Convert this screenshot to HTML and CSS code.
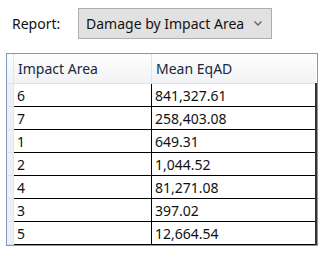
FILE: index.html
```html
<!DOCTYPE html>
<html lang="en">
<head>
    <meta charset="UTF-8">
    <meta name="viewport" content="width=device-width, initial-scale=1.0">
    <title>Damage Report</title>
    <link rel="stylesheet" href="styles.css">
</head>
<body>
    <div class="toolbar">
        <span class="label">Report:</span>
        <div class="select">
            <span>Damage by Impact Area</span>
            <svg class="chevron" width="8" height="5" viewBox="0 0 8 5"><path d="M0.5 0.5 L4 4 L7.5 0.5" fill="none" stroke="#606060" stroke-width="1.3"/></svg>
        </div>
    </div>

    <div class="grid">
        <table>
            <tr class="head">
                <th class="strip"></th>
                <th class="col1">Impact Area</th>
                <th class="col2">Mean EqAD</th>
            </tr>
            <tr><td class="strip"></td><td>6</td><td>841,327.61</td></tr>
            <tr><td class="strip"></td><td>7</td><td>258,403.08</td></tr>
            <tr><td class="strip"></td><td>1</td><td>649.31</td></tr>
            <tr><td class="strip"></td><td>2</td><td>1,044.52</td></tr>
            <tr><td class="strip"></td><td>4</td><td>81,271.08</td></tr>
            <tr><td class="strip"></td><td>3</td><td>397.02</td></tr>
            <tr><td class="strip"></td><td>5</td><td>12,664.54</td></tr>
        </table>
    </div>
</body>
</html>
```

FILE: styles.css
```css
body {
    font-family: 'Noto Sans', 'Open Sans', sans-serif;
    font-size: 14px;
    background-color: white;
    color: #111;
    margin: 0;
}
.toolbar {
    display: flex;
    align-items: center;
    padding: 8px 0 0 12px;
    height: 31px;
}
.label {
    width: 66px;
}
.select {
    display: flex;
    align-items: center;
    justify-content: space-between;
    box-sizing: border-box;
    width: 194px;
    height: 31px;
    padding: 0 9px 0 7px;
    background-color: #e1e1e1;
    border: 1px solid #adadad;
}
.grid {
    margin: 14px 0 0 6px;
    width: 312px;
    box-sizing: border-box;
    border: 1px solid #7a9ac0;
}
table {
    width: 100%;
    border-collapse: collapse;
}
th {
    height: 29px;
    padding: 0 0 0 4px;
    text-align: left;
    font-weight: normal;
    color: #1a2740;
    background: linear-gradient(#fdfdfd, #f1f2f4);
    border-bottom: 1px solid #e2e3e5;
}
th.col1 {
    width: 133px;
    border-right: 1px solid #e2e3e5;
}
td {
    height: 22px;
    padding: 0 0 0 3px;
    border-bottom: 1px solid #000;
    border-right: 1px solid #000;
}
.strip {
    width: 6px;
    padding: 0;
    background-color: #f0f0f0;
    border-right: 1px solid #e6e6e6;
    border-bottom: 1px solid #e0e0e0;
}
td:last-child {
    border-right: 2px solid #333;
}
```
